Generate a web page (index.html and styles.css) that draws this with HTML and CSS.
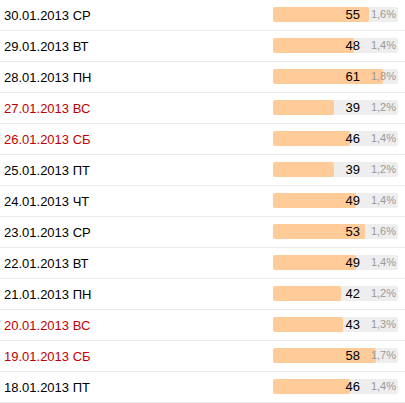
FILE: index.html
```html
<!DOCTYPE html>
<html lang="ru">
<head>
    <meta charset="UTF-8">
    <title>Посещаемость по дням</title>
    <link rel="stylesheet" href="styles.css">
</head>
<body>
    <div class="days">
        <div class="day">
            <span class="date">30.01.2013 СР</span>
            <div class="bar"><div class="fill" style="width:96px"></div><span class="count">55</span><span class="percent">1,6%</span></div>
        </div>
        <div class="day">
            <span class="date">29.01.2013 ВТ</span>
            <div class="bar"><div class="fill" style="width:81px"></div><span class="count">48</span><span class="percent">1,4%</span></div>
        </div>
        <div class="day">
            <span class="date">28.01.2013 ПН</span>
            <div class="bar"><div class="fill" style="width:110px"></div><span class="count">61</span><span class="percent">1,8%</span></div>
        </div>
        <div class="day weekend">
            <span class="date">27.01.2013 ВС</span>
            <div class="bar"><div class="fill" style="width:61px"></div><span class="count">39</span><span class="percent">1,2%</span></div>
        </div>
        <div class="day weekend">
            <span class="date">26.01.2013 СБ</span>
            <div class="bar"><div class="fill" style="width:77px"></div><span class="count">46</span><span class="percent">1,4%</span></div>
        </div>
        <div class="day">
            <span class="date">25.01.2013 ПТ</span>
            <div class="bar"><div class="fill" style="width:61px"></div><span class="count">39</span><span class="percent">1,2%</span></div>
        </div>
        <div class="day">
            <span class="date">24.01.2013 ЧТ</span>
            <div class="bar"><div class="fill" style="width:83px"></div><span class="count">49</span><span class="percent">1,4%</span></div>
        </div>
        <div class="day">
            <span class="date">23.01.2013 СР</span>
            <div class="bar"><div class="fill" style="width:92px"></div><span class="count">53</span><span class="percent">1,6%</span></div>
        </div>
        <div class="day">
            <span class="date">22.01.2013 ВТ</span>
            <div class="bar"><div class="fill" style="width:83px"></div><span class="count">49</span><span class="percent">1,4%</span></div>
        </div>
        <div class="day">
            <span class="date">21.01.2013 ПН</span>
            <div class="bar"><div class="fill" style="width:68px"></div><span class="count">42</span><span class="percent">1,2%</span></div>
        </div>
        <div class="day weekend">
            <span class="date">20.01.2013 ВС</span>
            <div class="bar"><div class="fill" style="width:70px"></div><span class="count">43</span><span class="percent">1,3%</span></div>
        </div>
        <div class="day weekend">
            <span class="date">19.01.2013 СБ</span>
            <div class="bar"><div class="fill" style="width:103px"></div><span class="count">58</span><span class="percent">1,7%</span></div>
        </div>
        <div class="day">
            <span class="date">18.01.2013 ПТ</span>
            <div class="bar"><div class="fill" style="width:77px"></div><span class="count">46</span><span class="percent">1,4%</span></div>
        </div>
    </div>
</body>
</html>
```

FILE: styles.css
```css
body {
    margin: 0;
    font-family: "Liberation Sans", Arial, sans-serif;
    background-color: #fff;
    color: #000;
}

.days {
    display: flex;
    flex-direction: column;
}

.day {
    height: 30px;
    display: flex;
    align-items: center;
    justify-content: space-between;
    padding: 0 7px 0 4px;
    border-bottom: 1px solid #ececec;
}

.date {
    font-size: 13px;
}

.weekend .date {
    color: #c00000;
}

.bar {
    width: 125px;
    height: 15px;
    margin-top: -1px;
    display: grid;
    grid-template-columns: 87px 38px;
    align-items: center;
    background-color: #eeeeee;
    border-radius: 2px;
}

.fill {
    grid-row: 1;
    grid-column: 1 / -1;
    justify-self: start;
    height: 15px;
    background-color: #ffcc99;
    border-radius: 2px;
}

.count {
    grid-row: 1;
    grid-column: 1;
    justify-self: end;
    font-size: 13px;
    line-height: 15px;
    position: relative;
}

.percent {
    grid-row: 1;
    grid-column: 2;
    justify-self: end;
    padding-right: 2px;
    font-size: 11px;
    line-height: 15px;
    color: #999;
    position: relative;
}
```
